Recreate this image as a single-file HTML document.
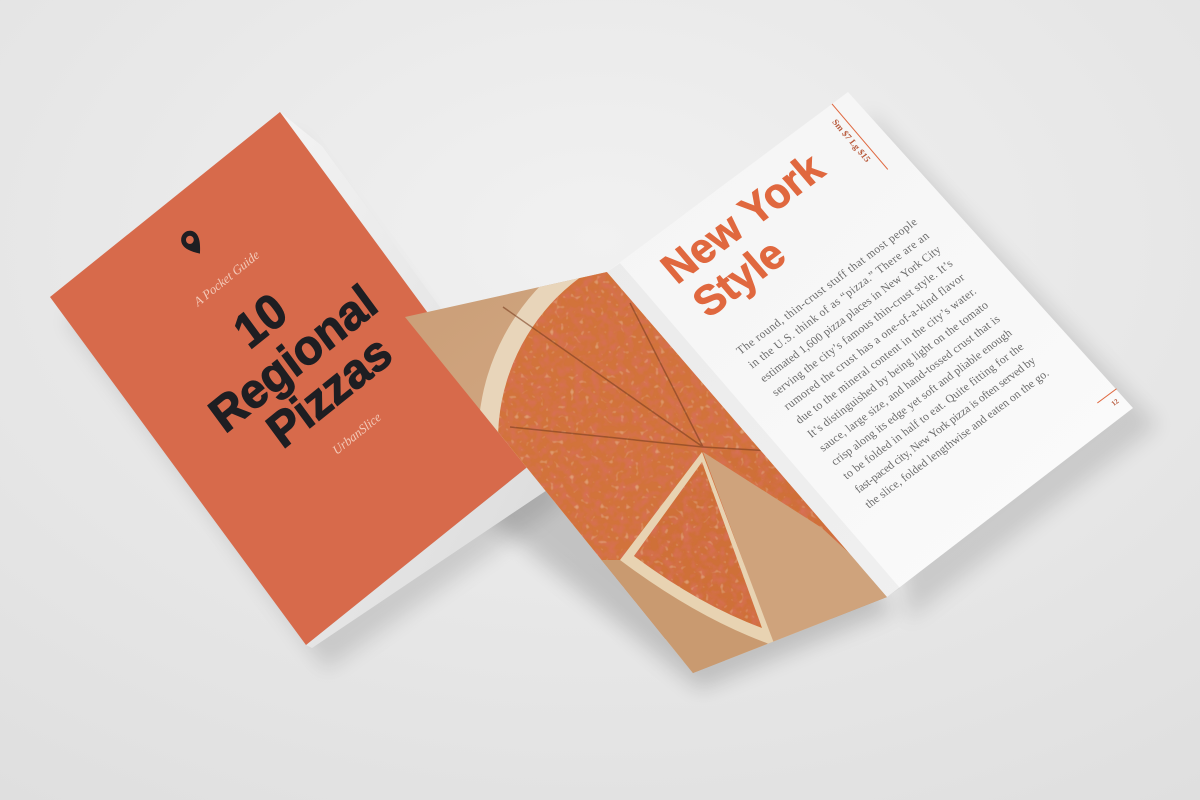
<!DOCTYPE html>
<html><head><meta charset="utf-8"><style>
html,body{margin:0;padding:0;width:1200px;height:800px;overflow:hidden;background:#e9e9e9}
svg{display:block}
</style></head><body>
<svg width="1200" height="800" viewBox="0 0 1200 800" xmlns="http://www.w3.org/2000/svg">
<defs>
<radialGradient id="bg" cx="0.5" cy="0.3" r="0.9"><stop offset="0" stop-color="#f1f1f1"/><stop offset="1" stop-color="#dedede"/></radialGradient>
<linearGradient id="wood" x1="0" y1="0" x2="1" y2="1"><stop offset="0" stop-color="#c99d76"/><stop offset="0.5" stop-color="#d4a984"/><stop offset="1" stop-color="#b98b62"/></linearGradient>
<linearGradient id="paper" x1="0" y1="0" x2="1" y2="1"><stop offset="0" stop-color="#f4f4f4"/><stop offset="1" stop-color="#fbfbfb"/></linearGradient>
<linearGradient id="back" x1="0" y1="0" x2="1" y2="1"><stop offset="0" stop-color="#f3f3f3"/><stop offset="1" stop-color="#d9d9d9"/></linearGradient>
<filter id="blur8" x="-50%" y="-50%" width="200%" height="200%"><feGaussianBlur stdDeviation="10"/></filter>
<filter id="cheese" x="0" y="0" width="100%" height="100%">
<feTurbulence type="fractalNoise" baseFrequency="0.12" numOctaves="2" seed="4" result="n"/>
<feColorMatrix in="n" type="matrix" values="0 0 0 0 0.68  0 0 0 0 0.16  0 0 0 0 0.09  0 0 0 2.2 -0.85" result="spots"/>
<feComposite in="spots" in2="SourceGraphic" operator="in" result="s2"/>
<feTurbulence type="fractalNoise" baseFrequency="0.2" numOctaves="1" seed="9" result="m"/>
<feColorMatrix in="m" type="matrix" values="0 0 0 0 0.95  0 0 0 0 0.72  0 0 0 0 0.42  0 0 0 1.6 -1.0" result="hi"/>
<feComposite in="hi" in2="SourceGraphic" operator="in" result="h2"/>
<feMerge><feMergeNode in="SourceGraphic"/><feMergeNode in="s2"/><feMergeNode in="h2"/></feMerge>
</filter>
<clipPath id="pzclip"><polygon points="405,317 607,272 887,597 693,673"/></clipPath>
</defs>
<rect width="1200" height="800" fill="url(#bg)"/>

<polygon points="60,310 290,125 560,490 320,660" fill="#000" opacity="0.12" filter="url(#blur8)" transform="translate(6,10)"/>
<polygon points="430,470 700,420 895,610 700,690" fill="#000" opacity="0.16" filter="url(#blur8)"/>
<polygon points="860,100 1150,415 900,610" fill="#000" opacity="0.12" filter="url(#blur8)" transform="translate(8,10)"/>

<polygon points="280,112 322,146 565,478 312,648 306,645 536,460" fill="url(#back)"/>
<polygon points="50,297 280,112 536,460 306,645" fill="#d76a4b"/>
<g transform="matrix(0.767,-0.617,0.595,0.809,50,297)">
  <path d="M149,60 C142,52 140,47 140,43 A9,9 0 1 1 158,43 C158,47 156,52 149,60 Z M149,39 A4,4 0 1 0 149.01,39 Z" fill="#1e1e22" fill-rule="evenodd"/>
  <text x="156" y="100" text-anchor="middle" font-family="Liberation Serif, serif" font-style="italic" font-size="13" fill="#f3c9b8">A Pocket Guide</text>
  <text x="158" y="166" text-anchor="middle" font-family="Liberation Sans, sans-serif" font-weight="bold" font-size="48" fill="#1e1e22" stroke="#1e1e22" stroke-width="1.2">10</text>
  <text x="162" y="216" text-anchor="middle" font-family="Liberation Sans, sans-serif" font-weight="bold" font-size="48" fill="#1e1e22" stroke="#1e1e22" stroke-width="1.2">Regional</text>
  <text x="172" y="264" text-anchor="middle" font-family="Liberation Sans, sans-serif" font-weight="bold" font-size="48" fill="#1e1e22" stroke="#1e1e22" stroke-width="1.2">Pizzas</text>
  <text x="169" y="302" text-anchor="middle" font-family="Liberation Serif, serif" font-style="italic" font-size="13" fill="#f3c9b8">UrbanSlice</text>
</g>

<g clip-path="url(#pzclip)">
  <rect x="380" y="250" width="540" height="450" fill="url(#wood)"/>
  <circle cx="700" cy="440" r="222" fill="#e8d5ba"/>
  <circle cx="700" cy="440" r="202" fill="#d2733a" filter="url(#cheese)"/>
  <polygon points="703,452 775,648 940,660 940,560 822,528" fill="#cfa37c"/>
  <polygon points="560,560 630,560 775,648 700,700 560,700" fill="#c99a70"/>
  <path d="M702,452 L620,560 Q700,620 775,646 Z" fill="#e8d3b2"/>
  <path d="M702,462 L634,556 Q700,605 762,628 Z" fill="#cf7038" filter="url(#cheese)"/>
  <polygon points="712,452 822,528 900,600 900,510 760,446" fill="#cf7038" filter="url(#cheese)"/>
  <g stroke="#7a3f20" stroke-width="1.5" opacity="0.6">
    <line x1="703" y1="447" x2="503" y2="307"/>
    <line x1="703" y1="447" x2="510" y2="427"/>
    <line x1="703" y1="447" x2="630" y2="303"/>
    <line x1="703" y1="447" x2="790" y2="452"/>
  </g>
</g>

<polygon points="607,272 848,92 1133,408 887,597" fill="url(#paper)"/>
<polygon points="607,272 620,263 900,588 887,597" fill="#000" opacity="0.04"/>
<g transform="matrix(0.8,-0.593,0.664,0.779,608,270)">
  <text x="43" y="52" font-family="Liberation Sans, sans-serif" font-weight="bold" font-size="42" fill="#e0683f" stroke="#e0683f" stroke-width="0.8">New York</text>
  <text x="45" y="97" font-family="Liberation Sans, sans-serif" font-weight="bold" font-size="42" fill="#e0683f" stroke="#e0683f" stroke-width="0.8">Style</text>
  <line x1="280" y1="0" x2="280" y2="84" stroke="#e0683f" stroke-width="1"/>
  <text transform="translate(268,14) rotate(90)" font-family="Liberation Serif, serif" font-weight="bold" font-size="9" fill="#b85a3c">Sm $7  Lg $15</text>
  <line x1="288" y1="390" x2="312" y2="390" stroke="#e0683f" stroke-width="1"/>
  <text x="302" y="402" text-anchor="middle" font-family="Liberation Serif, serif" font-weight="bold" font-size="7" fill="#b85a3c">12</text>
  <g font-family="Liberation Serif, serif" font-size="11.5" fill="#6a6a6a">
    <text x="46" y="144" textLength="222" lengthAdjust="spacing">The round, thin-crust stuff that most people</text>
    <text x="46" y="161.8" textLength="222" lengthAdjust="spacing">in the U.S. think of as “pizza.” There are an</text>
    <text x="46" y="179.6" textLength="222" lengthAdjust="spacing">estimated 1,600 pizza places in New York City</text>
    <text x="46" y="197.4" textLength="222" lengthAdjust="spacing">serving the city’s famous thin-crust style. It’s</text>
    <text x="46" y="215.2" textLength="222" lengthAdjust="spacing">rumored the crust has a one-of-a-kind flavor</text>
    <text x="46" y="233" textLength="222" lengthAdjust="spacing">due to the mineral content in the city’s water.</text>
    <text x="46" y="250.8" textLength="222" lengthAdjust="spacing">It’s distinguished by being light on the tomato</text>
    <text x="46" y="268.6" textLength="222" lengthAdjust="spacing">sauce, large size, and hand-tossed crust that is</text>
    <text x="46" y="286.4" textLength="222" lengthAdjust="spacing">crisp along its edge yet soft and pliable enough</text>
    <text x="46" y="304.2" textLength="222" lengthAdjust="spacing">to be folded in half to eat. Quite fitting for the</text>
    <text x="46" y="322" textLength="222" lengthAdjust="spacing">fast-paced city, New York pizza is often served by</text>
    <text x="44" y="339.8" textLength="226" lengthAdjust="spacing">the slice, folded lengthwise and eaten on the go.</text>
  </g>
</g>
</svg>
</body></html>
